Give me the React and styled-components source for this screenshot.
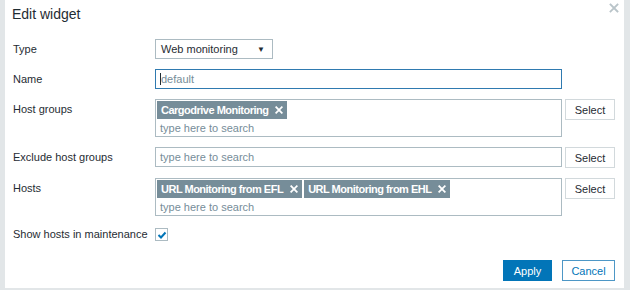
import styled, { createGlobalStyle } from 'styled-components';

const GlobalStyle = createGlobalStyle`
  html, body {
    margin: 0;
    padding: 0;
    background: #e2e6e8;
  }
  body {
    font-family: "Liberation Sans", Arial, sans-serif;
    font-size: 11px;
    color: #1f2c33;
  }
`;

const Page = styled.div`
  width: 630px;
  height: 290px;
  display: flex;
  align-items: flex-start;
  padding-left: 5px;
  box-sizing: border-box;
`;

const Dialog = styled.div`
  position: relative;
  width: 619px;
  height: 288px;
  background: #fff;
  box-sizing: border-box;
  padding: 6px 9px 0 8px;
  display: flex;
  flex-direction: column;
`;

const Title = styled.h4`
  margin: 0 0 0 -1px;
  font-size: 14px;
  font-weight: normal;
  line-height: 16px;
  color: #1f2c33;
  height: 33px;
`;

const Close = styled.button`
  position: absolute;
  top: 1px;
  right: 3px;
  border: none;
  background: none;
  padding: 0;
  width: 14px;
  height: 14px;
  cursor: pointer;
`;

const Form = styled.div`
  display: grid;
  grid-template-columns: 142px 410px 50px;
  row-gap: 10px;
  align-items: start;
`;

const Label = styled.label`
  line-height: ${(p) => p.h || 20}px;
  white-space: nowrap;
`;

const Field = styled.div`
  grid-column: ${(p) => (p.wide ? '2 / 4' : 'auto')};
  display: flex;
  align-items: center;
  margin-right: ${(p) => (p.wide ? 0 : 3)}px;
`;

const SelectBox = styled.div`
  width: 118px;
  height: 20px;
  box-sizing: border-box;
  border: 1px solid #acbbc2;
  background: #fff;
  display: flex;
  align-items: center;
  justify-content: space-between;
  padding: 0 7px 0 5px;
`;

const Arrow = styled.span`
  font-size: 8px;
  color: #1f2c33;
`;

const TextInput = styled.div`
  width: 100%;
  height: 20px;
  box-sizing: border-box;
  border: 1px solid ${(p) => (p.focused ? '#2f7ab0' : '#acbbc2')};
  padding: 0 4px;
  display: flex;
  align-items: center;
  color: ${(p) => (p.muted ? '#768d99' : '#1f2c33')};
`;

const Caret = styled.span`
  display: inline-block;
  width: 1px;
  height: 12px;
  background: #1f2c33;
`;

const Multi = styled.div`
  width: 100%;
  height: 38px;
  box-sizing: border-box;
  border: 1px solid #acbbc2;
  padding: 1px 1px 0 1px;
  display: flex;
  flex-direction: column;
`;

const Chips = styled.div`
  display: flex;
  gap: 2px;
  height: 18px;
`;

const Chip = styled.span`
  display: inline-flex;
  align-items: center;
  background: #768d99;
  color: #fff;
  font-weight: bold;
  letter-spacing: -0.5px;
  height: 18px;
  padding: 0 4px;
  gap: 7px;
  white-space: nowrap;
`;

const Search = styled.div`
  color: #768d99;
  padding-left: 3px;
  line-height: 18px;
`;

const Button = styled.button`
  font-family: "Liberation Sans", Arial, sans-serif;
  font-size: 11px;
  height: 21px;
  box-sizing: border-box;
  padding: 0;
  cursor: pointer;
  border: 1px solid ${(p) => (p.primary ? '#0275b8' : p.outline ? '#4d97c6' : '#d2d9dc')};
  background: ${(p) => (p.primary ? '#0275b8' : '#fff')};
  color: ${(p) => (p.primary ? '#fff' : p.outline ? '#0275b8' : '#1f2c33')};
  width: ${(p) => p.w || 50}px;
`;

const Check = styled.span`
  display: inline-flex;
  align-items: center;
  justify-content: center;
  width: 13px;
  height: 13px;
  box-sizing: border-box;
  border: 1px solid #acbbc2;
  background: #fff;
  margin-top: 2px;
`;

const Footer = styled.div`
  margin-top: auto;
  margin-bottom: 7px;
  display: flex;
  justify-content: flex-end;
  gap: 10px;
`;

const X = ({ size = 8, color = '#fff', w = 2.2 }) => (
  <svg width={size} height={size} viewBox="0 0 10 10">
    <path d="M1.5 1.5 L8.5 8.5 M8.5 1.5 L1.5 8.5" stroke={color} strokeWidth={w} strokeLinecap="square" />
  </svg>
);

const MultiSelect = ({ items }) => (
  <Multi>
    <Chips>
      {items.map((it) => (
        <Chip key={it}>
          {it}
          <X />
        </Chip>
      ))}
    </Chips>
    <Search>type here to search</Search>
  </Multi>
);

const App = () => (
  <>
    <GlobalStyle />
    <Page>
      <Dialog>
        <Title>Edit widget</Title>
        <Close>
          <X size={10} color="#b9c4c9" w={1.8} />
        </Close>
        <Form>
          <Label>Type</Label>
          <Field wide>
            <SelectBox>
              Web monitoring
              <Arrow>▼</Arrow>
            </SelectBox>
          </Field>

          <Label>Name</Label>
          <Field>
            <TextInput focused muted>
              <Caret />
              default
            </TextInput>
          </Field>
          <div />

          <Label>Host groups</Label>
          <Field>
            <MultiSelect items={['Cargodrive Monitoring']} />
          </Field>
          <Button>Select</Button>

          <Label>Exclude host groups</Label>
          <Field>
            <TextInput muted>type here to search</TextInput>
          </Field>
          <Button>Select</Button>

          <Label>Hosts</Label>
          <Field>
            <MultiSelect items={['URL Monitoring from EFL', 'URL Monitoring from EHL']} />
          </Field>
          <Button>Select</Button>

          <Label h={17}>Show hosts in maintenance</Label>
          <Field wide>
            <Check>
              <svg width="10" height="10" viewBox="0 0 10 10">
                <path d="M1.5 5 L4 7.5 L8.5 2.5" fill="none" stroke="#0275b8" strokeWidth="2" />
              </svg>
            </Check>
          </Field>
        </Form>
        <Footer>
          <Button primary w={49}>Apply</Button>
          <Button outline w={53}>Cancel</Button>
        </Footer>
      </Dialog>
    </Page>
  </>
);

export default App;
